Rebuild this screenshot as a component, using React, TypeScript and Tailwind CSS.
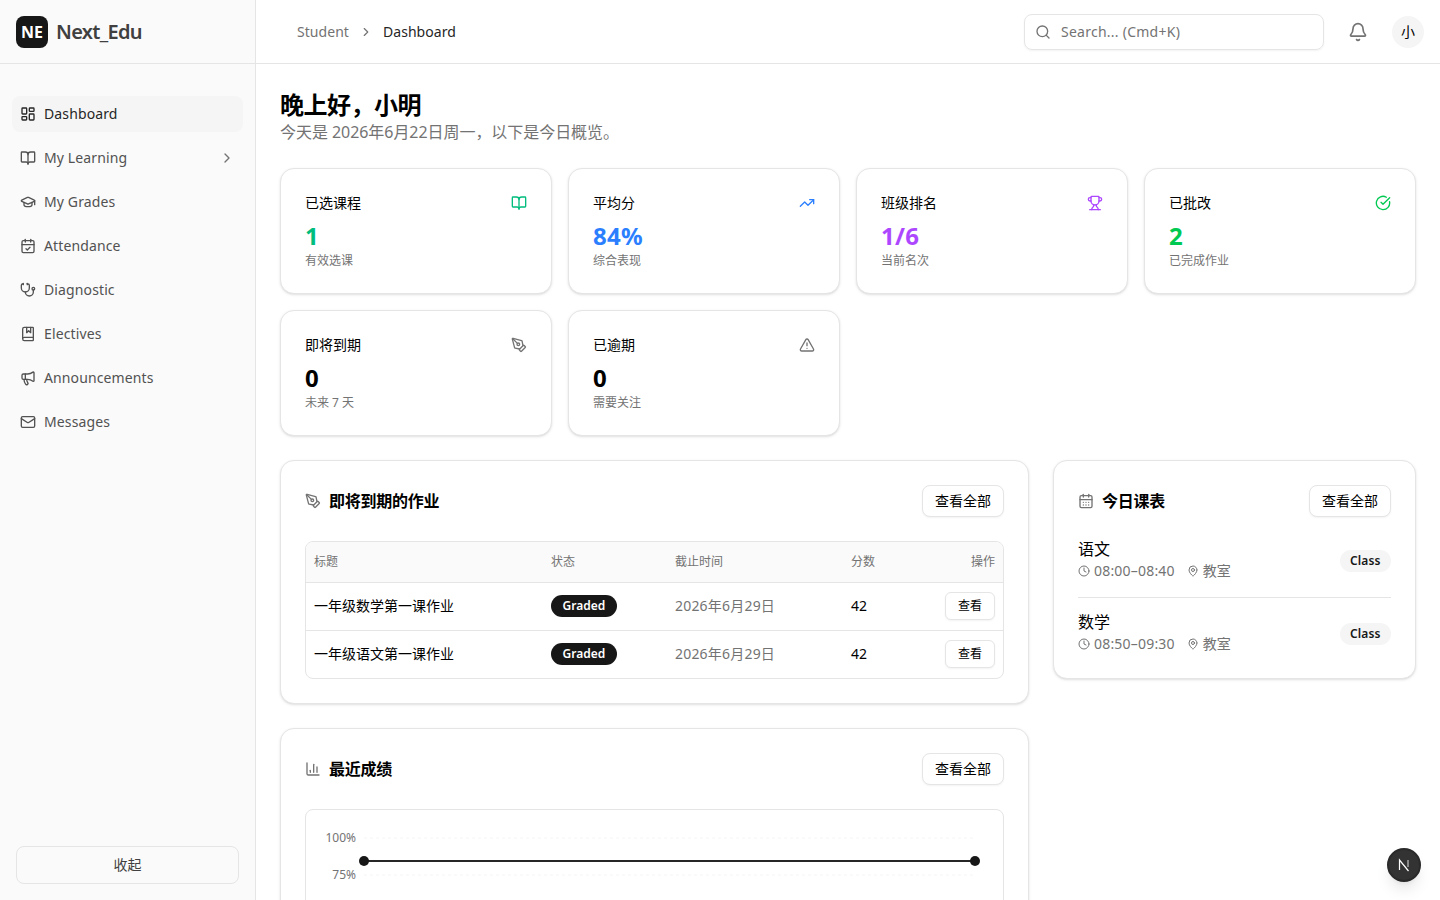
import React from 'react';
import {
  LayoutDashboard, BookOpen, GraduationCap, CalendarCheck, Stethoscope, BookMarked, Megaphone, Mail,
  ChevronRight, Search, Bell, TrendingUp, Trophy, CircleCheckBig, PenTool, TriangleAlert, CalendarDays,
  Clock, MapPin, ChartColumn,
} from 'lucide-react';

const navItems = [
  { label: 'Dashboard', icon: LayoutDashboard, active: true },
  { label: 'My Learning', icon: BookOpen, arrow: true },
  { label: 'My Grades', icon: GraduationCap },
  { label: 'Attendance', icon: CalendarCheck },
  { label: 'Diagnostic', icon: Stethoscope },
  { label: 'Electives', icon: BookMarked },
  { label: 'Announcements', icon: Megaphone },
  { label: 'Messages', icon: Mail },
];

const stats = [
  { title: '已选课程', value: '1', sub: '有效选课', icon: BookOpen, color: 'text-emerald-500' },
  { title: '平均分', value: '84%', sub: '综合表现', icon: TrendingUp, color: 'text-blue-500' },
  { title: '班级排名', value: '1/6', sub: '当前名次', icon: Trophy, color: 'text-purple-500' },
  { title: '已批改', value: '2', sub: '已完成作业', icon: CircleCheckBig, color: 'text-green-500' },
  { title: '即将到期', value: '0', sub: '未来 7 天', icon: PenTool, color: 'text-black', iconColor: 'text-neutral-500' },
  { title: '已逾期', value: '0', sub: '需要关注', icon: TriangleAlert, color: 'text-black', iconColor: 'text-neutral-500' },
];

const assignments = [
  { title: '一年级数学第一课作业', due: '2026年6月29日', score: 42 },
  { title: '一年级语文第一课作业', due: '2026年6月29日', score: 42 },
];

const schedule = [
  { name: '语文', time: '08:00–08:40' },
  { name: '数学', time: '08:50–09:30' },
];

const SectionHead = ({ icon: Icon, title }: { icon: React.ElementType; title: string }) => (
  <div className="flex items-center justify-between">
    <div className="flex items-center gap-2">
      <Icon className="w-4 h-4 text-neutral-500" />
      <h2 className="text-base font-semibold tracking-[-0.25px] text-black">{title}</h2>
    </div>
    <button className="h-8 px-3 text-sm font-normal text-black bg-white border border-neutral-200 rounded-lg shadow-xs">
      查看全部
    </button>
  </div>
);

export default function App() {
  return (
    <div className="flex h-screen overflow-hidden bg-white text-black font-['Noto_Sans','Noto_Sans_CJK_SC',sans-serif]">
      {/* Sidebar */}
      <aside className="w-64 shrink-0 flex flex-col bg-[#fafafa] border-r border-neutral-200">
        <div className="h-16 shrink-0 flex items-center gap-2 px-4 border-b border-neutral-200">
          <div className="w-8 h-8 rounded-lg bg-[#171717] text-white flex items-center justify-center text-base font-bold">NE</div>
          <span className="text-xl font-semibold tracking-[-0.7px] text-neutral-700">Next_Edu</span>
        </div>
        <nav className="flex-1 pt-8 pl-3 pr-3 flex flex-col gap-2">
          {navItems.map((item) => (
            <div
              key={item.label}
              className={`h-9 flex items-center gap-2 px-2 rounded-lg text-sm tracking-[0.12px] ${item.active ? 'bg-neutral-100 text-neutral-800' : 'text-neutral-600'}`}
            >
              <item.icon className="w-4 h-4" />
              <span className="flex-1">{item.label}</span>
              {item.arrow && <ChevronRight className="w-4 h-4 text-neutral-500" />}
            </div>
          ))}
        </nav>
        <div className="p-4">
          <button className="w-full h-[38px] text-sm text-neutral-700 border border-neutral-200 rounded-lg bg-[#fafafa]">收起</button>
        </div>
      </aside>

      <div className="flex-1 min-w-0 flex flex-col">
        {/* Header */}
        <header className="h-16 shrink-0 flex items-center justify-between pl-[41px] pr-4 border-b border-neutral-200">
          <div className="flex items-center gap-2.5 text-sm tracking-[0.05px]">
            <span className="text-neutral-500">Student</span>
            <ChevronRight className="w-3.5 h-3.5 text-neutral-500" />
            <span className="text-neutral-800">Dashboard</span>
          </div>
          <div className="flex items-center gap-4">
            <div className="w-[300px] h-9 flex items-center gap-2.5 px-2.5 border border-neutral-200 rounded-lg shadow-xs">
              <Search className="w-4 h-4 text-neutral-500" />
              <span className="text-sm tracking-[0.25px] text-neutral-500">Search... (Cmd+K)</span>
            </div>
            <div className="w-9 h-9 flex items-center justify-center">
              <Bell className="w-5 h-5 text-neutral-500" />
            </div>
            <div className="w-8 h-8 rounded-full bg-neutral-100 flex items-center justify-center text-sm">小</div>
          </div>
        </header>

        {/* Content */}
        <main className="flex-1 min-h-0 overflow-hidden p-6">
          <h1 className="pt-px h-8 text-2xl leading-8 font-bold tracking-[-0.5px]">晚上好，小明</h1>
          <p className="text-base tracking-[-0.05px] text-neutral-500">今天是 2026年6月22日周一，以下是今日概览。</p>

          <div className="mt-6 grid grid-cols-4 gap-4">
            {stats.map((s) => (
              <div key={s.title} className="p-6 bg-white border border-neutral-200 rounded-[14px] shadow-sm">
                <div className="flex items-center justify-between">
                  <span className="text-sm">{s.title}</span>
                  <s.icon className={`w-4 h-4 ${s.iconColor ?? s.color}`} />
                </div>
                <div className={`mt-[7px] text-2xl font-bold tracking-[0.3px] ${s.color}`}>{s.value}</div>
                <div className="mt-px text-xs text-neutral-500">{s.sub}</div>
              </div>
            ))}
          </div>

          <div className="mt-6 grid grid-cols-[749px_363px] gap-6 items-start">
            <div className="flex flex-col gap-6">
              <section className="p-6 bg-white border border-neutral-200 rounded-[14px] shadow-sm">
                <SectionHead icon={PenTool} title="即将到期的作业" />
                <div className="mt-6 border border-neutral-200 rounded-lg overflow-hidden">
                  <table className="w-full table-fixed text-sm">
                    <thead>
                      <tr className="h-10 bg-[#fafafa] border-b border-neutral-200 text-xs text-neutral-500">
                        <th className="w-[245px] pl-2 text-left font-normal">标题</th>
                        <th className="w-[124px] text-left font-normal">状态</th>
                        <th className="w-[176px] text-left font-normal">截止时间</th>
                        <th className="w-[80px] text-left font-normal">分数</th>
                        <th className="pr-2 text-right font-normal">操作</th>
                      </tr>
                    </thead>
                    <tbody>
                      {assignments.map((a, i) => (
                        <tr key={a.title} className={`h-12 ${i > 0 ? 'border-t border-neutral-200' : ''}`}>
                          <td className="pl-2">{a.title}</td>
                          <td>
                            <span className="inline-flex items-center h-[22px] px-[11.5px] rounded-full bg-[#171717] text-white text-xs font-semibold">Graded</span>
                          </td>
                          <td className="text-neutral-500 tracking-[0.2px]">{a.due}</td>
                          <td>{a.score}</td>
                          <td className="pr-2 text-right">
                            <button className="h-7 px-3 text-xs bg-white border border-neutral-200 rounded-md shadow-xs">查看</button>
                          </td>
                        </tr>
                      ))}
                    </tbody>
                  </table>
                </div>
              </section>

              <section className="p-6 bg-white border border-neutral-200 rounded-[14px] shadow-sm">
                <SectionHead icon={ChartColumn} title="最近成绩" />
                <div className="mt-6 h-[300px] border border-neutral-200 rounded-lg">
                  <svg width="697" height="298" viewBox="0 0 697 298">
                    {[28, 65].map((y) => (
                      <line key={y} x1="58" x2="669" y1={y} y2={y} stroke="#f5f5f5" strokeDasharray="3 3" />
                    ))}
                    <text x="50" y="32" textAnchor="end" fontSize="12" fill="#737373">100%</text>
                    <text x="50" y="69" textAnchor="end" fontSize="12" fill="#737373">75%</text>
                    <line x1="58" x2="669" y1="51" y2="51" stroke="#262626" strokeWidth="2" />
                    <circle cx="58" cy="51" r="5" fill="#171717" />
                    <circle cx="669" cy="51" r="5" fill="#171717" />
                  </svg>
                </div>
              </section>
            </div>

            <section className="p-6 bg-white border border-neutral-200 rounded-[14px] shadow-sm">
              <SectionHead icon={CalendarDays} title="今日课表" />
              <div className="mt-2">
                {schedule.map((c, i) => (
                  <div key={c.name} className={`flex items-center justify-between pt-3 ${i === 0 ? 'pb-4 border-b border-neutral-200' : ''}`}>
                    <div>
                      <div className="text-base">{c.name}</div>
                      <div className="flex items-center gap-3 text-sm text-neutral-500">
                        <span className="flex items-center gap-1 tracking-[0.2px]"><Clock className="w-3 h-3" />{c.time}</span>
                        <span className="flex items-center gap-1"><MapPin className="w-3 h-3" />教室</span>
                      </div>
                    </div>
                    <span className="mt-1 inline-flex items-center h-[22px] px-[10.5px] rounded-full bg-neutral-100 text-xs font-semibold tracking-[0.1px] text-neutral-900">Class</span>
                  </div>
                ))}
              </div>
            </section>
          </div>
        </main>
      </div>

      {/* dev indicator */}
      <div className="fixed right-[19px] bottom-[18px] w-[34px] h-[34px] rounded-full bg-[#333333] border-2 border-[#2a2a2a] shadow-lg flex items-center justify-center">
        <svg width="14" height="14" viewBox="0 0 14 14" fill="none">
          <path d="M2.5 12V2L11.5 13" stroke="#ffffff" strokeWidth="1.2" />
          <line x1="11" y1="2" x2="11" y2="9" stroke="#ffffff" strokeOpacity="0.7" strokeWidth="1.2" />
        </svg>
      </div>
    </div>
  );
}
